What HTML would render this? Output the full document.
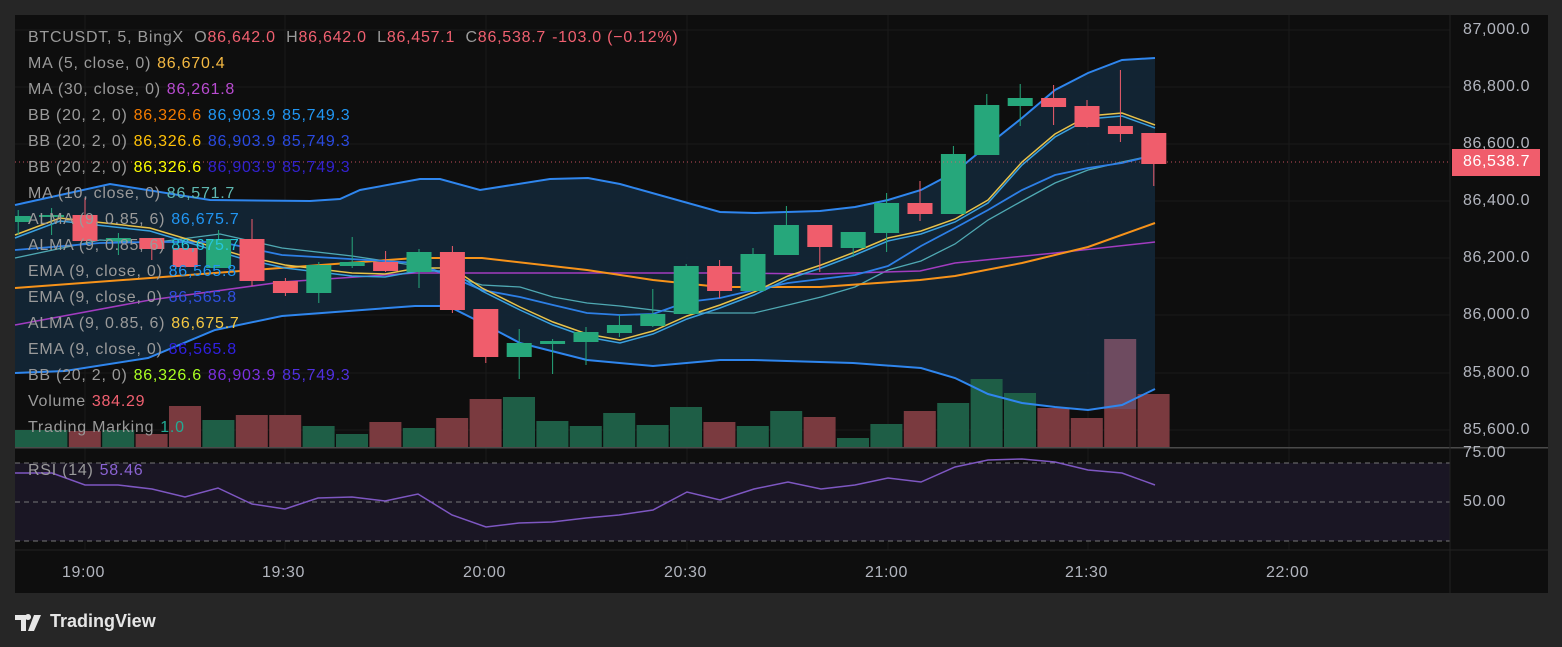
<!DOCTYPE html><html><head><meta charset="utf-8"><style>
body{margin:0;background:#262626;width:1562px;height:647px;overflow:hidden;font-family:"Liberation Sans",sans-serif}
#c{position:absolute;left:15px;top:15px;width:1533px;height:578px;background:#0e0e0e}
svg{position:absolute;left:0;top:0}
.lg{position:absolute;left:28px;font-size:16px;letter-spacing:0.75px;color:#9a9a9a;white-space:nowrap;line-height:18px}
.lg span{margin-left:6px}
.ax{position:absolute;font-size:16px;letter-spacing:0.6px;color:#b2b5be}
#logo{position:absolute;left:15px;top:610px;color:#e6e6e6;font-size:18px;font-weight:bold}
</style></head><body>
<div id="c"></div>
<svg id="s" width="1562" height="647"></svg>
<div id="lgs"></div>
<div id="logo"><svg width="30" height="20" viewBox="0 0 30 20" style="position:relative;top:3px;left:0"><path d="M0 2h11v16h-5v-11h-6z M13 7a3 3 0 1 1 0.1 0z M19 2h7l-7 16h-6z" fill="#e6e6e6"/></svg><span style="position:absolute;left:35px;top:1px;white-space:nowrap">TradingView</span></div>
<script>
const S=document.getElementById('s');let h='';
[30,87,144,201,258,315,373,430].forEach(y=>h+=`<line x1="15" x2="1450" y1="${y}" y2="${y}" stroke="#1a1a1a"/>`);
[85,285,486,687,888,1088,1289].forEach(x=>h+=`<line x1="${x}" x2="${x}" y1="15" y2="550" stroke="#1a1a1a"/>`);
function pl(p){return p.map(a=>a.join(',')).join(' ')}
const up=[[15,205],[110,184],[210,200],[310,201],[340,199],[360,190],[420,179],[440,179],[480,190],[550,179],[588,178],[620,184],[720,212],[755,213],[820,211],[855,207],[888,200],[921,190],[955,172],[988,145],[1022,118],[1055,90],[1088,73],[1122,60],[1155,58]];
const lo=[[15,373],[65,371],[148,358],[215,330],[282,316],[415,306],[448,306],[482,323],[520,343],[587,360],[653,366],[720,360],[753,360],[820,362],[853,363],[921,368],[955,378],[988,394],[1022,403],[1055,407],[1088,410],[1122,405],[1155,389]];
h+=`<polygon points="${pl(up)} ${pl(lo.slice().reverse())}" fill="#13283a" opacity=".85"/>`;
const vol=[[-2,430,1],[-1,430,1],[0,431,0],[1,430,1],[2,434,0],[3,406,0],[4,420,1],[5,415,0],[6,415,0],[7,426,1],[8,434,1],[9,422,0],[10,428,1],[11,418,0],[12,399,0],[13,397,1],[14,421,1],[15,426,1],[16,413,1],[17,425,1],[18,407,1],[19,422,0],[20,426,1],[21,411,1],[22,417,0],[23,438,1],[24,424,1],[25,411,0],[26,403,1],[27,379,1],[28,393,1],[29,408,0],[30,418,0],[31,339,2],[32,394,0]];
vol.forEach(v=>{let x=85+v[0]*33.4-16.2;let c=v[2]==1?'#1e5e46':'#7a3a3f';if(x<15)x=15;
if(v[2]==2){h+=`<rect x="${x}" y="339" width="32" height="70" fill="#6e4b60"/><rect x="${x}" y="409" width="32" height="38" fill="#7a3a3f"/>`}
else h+=`<rect x="${x}" y="${v[1]}" width="32" height="${447-v[1]}" fill="${c}"/>`});
function L(p,c,w){h+=`<polyline points="${pl(p)}" fill="none" stroke="${c}" stroke-width="${w||1.5}"/>`}
L([[15,258],[100,240],[150,243],[220,234],[282,248],[352,256],[418,266],[482,285],[520,287],[553,297],[587,303],[620,306],[653,310],[687,313],[754,313],[788,305],[821,297],[855,287],[888,270],[921,261],[955,244],[988,220],[1022,201],[1055,183],[1088,170],[1122,162],[1155,155]],'#4fa9b3',1.3);
L([[15,325],[150,300],[282,282],[415,273],[482,273],[720,273],[820,274],[920,271],[955,263],[1055,253],[1155,242]],'#a23cc0',1.5);
L([[15,288],[150,278],[280,268],[415,258],[482,258],[587,270],[653,280],[720,287],[820,287],[920,280],[955,276],[1022,263],[1088,247],[1155,223]],'#f7931a',2);
L([[15,250],[100,243],[150,242],[220,242],[282,255],[418,263],[482,290],[520,297],[553,305],[587,313],[620,315],[653,314],[687,302],[720,298],[754,290],[788,283],[821,279],[855,275],[888,266],[921,246],[955,228],[988,210],[1022,190],[1055,175],[1088,168],[1122,163],[1155,155]],'#2d7fe6',1.8);
const yl=[[15,235],[60,218],[150,228],[240,255],[285,265],[352,273],[385,274],[418,268],[452,268],[482,288],[520,307],[553,322],[587,334],[620,340],[653,331],[687,316],[720,305],[754,292],[788,276],[821,265],[855,252],[888,238],[921,231],[955,219],[988,200],[1022,162],[1055,134],[1088,116],[1122,113],[1155,125]];
L(yl.map(p=>[p[0],p[1]+3]),'#3aa0e0',1.5);L(yl,'#e8c24a',1.5);
L(up,'#2f86ee',2);L(lo,'#2f86ee',2);
const cd=[[-2,216,222,210,235,1],[-1,215,217,208,235,1],[0,215,241,198,241,0],[1,238,241,233,255,1],[2,238,249,238,260,0],[3,248,267,248,267,0],[4,239,268,230,268,1],[5,239,281,219,286,0],[6,281,293,278,296,0],[7,265,293,262,303,1],[8,262,266,237,268,1],[9,262,271,251,272,0],[10,252,272,249,288,1],[11,252,310,246,313,0],[12,309,357,309,363,0],[13,343,357,329,379,1],[14,341,344,339,374,1],[15,332,342,327,365,1],[16,325,333,315,337,1],[17,314,326,289,327,1],[18,266,314,264,314,1],[19,266,291,260,298,0],[20,254,291,248,291,1],[21,225,255,206,255,1],[22,225,247,225,272,0],[23,232,248,232,257,1],[24,203,233,193,252,1],[25,203,214,181,221,0],[26,154,214,146,214,1],[27,105,155,94,155,1],[28,98,106,84,126,1],[29,98,107,85,125,0],[30,106,127,100,128,0],[31,126,134,70,142,0],[32,133,164,133,186,0]];
cd.forEach(c=>{let x=85+c[0]*33.4;let col=c[5]?'#26a77b':'#f05d6c';let bx=Math.max(15,x-12.5);let bw=x-12.5<15?x+12.5-15:25;
if(x>=15)h+=`<line x1="${x}" x2="${x}" y1="${c[3]}" y2="${c[4]}" stroke="${col}"/>`;
h+=`<rect x="${bx}" y="${c[1]}" width="${bw}" height="${Math.max(2,c[2]-c[1])}" fill="${col}"/>`});
h+=`<line x1="15" x2="1450" y1="162" y2="162" stroke="#f05d6c" stroke-dasharray="1 3" opacity=".8"/>`;
h+=`<rect x="15" y="447" width="1533" height="1.5" fill="#4a4a4a"/>`;
h+=`<rect x="15" y="463" width="1435" height="78" fill="#1a1624"/>`;
[463,502,541].forEach(y=>h+=`<line x1="15" x2="1450" y1="${y}" y2="${y}" stroke="#777" stroke-dasharray="5 4"/>`);
L([[15,473],[52,473],[85,485],[118,485],[152,489],[185,497],[218,488],[252,504],[285,509],[318,498],[352,497],[385,501],[418,494],[452,515],[486,527],[519,523],[552,522],[586,518],[619,515],[653,510],[687,492],[720,500],[754,489],[788,482],[821,489],[855,485],[888,478],[921,482],[955,467],[988,460],[1022,459],[1055,462],[1088,470],[1122,473],[1155,485]],'#7e57c2',1.5);
h+=`<line x1="15" x2="1548" y1="550" y2="550" stroke="#222"/><line x1="1450" x2="1450" y1="15" y2="593" stroke="#222"/>`;
h+=`<rect x="1452" y="149" width="88" height="27" fill="#f05d6c"/>`;
S.innerHTML=h;
let t='';
[["87,000.0",30],["86,800.0",87],["86,600.0",144],["86,400.0",201],["86,200.0",258],["86,000.0",315],["85,800.0",373],["85,600.0",430],["75.00",453],["50.00",502]].forEach(a=>t+=`<div class="ax" style="left:1463px;top:${a[1]-9}px">${a[0]}</div>`);
t+=`<div class="ax" style="left:1463px;top:153px;color:#fff">86,538.7</div>`;
[["19:00",85],["19:30",285],["20:00",486],["20:30",687],["21:00",888],["21:30",1088],["22:00",1289]].forEach(a=>t+=`<div class="ax" style="left:${a[1]-23}px;top:564px">${a[0]}</div>`);
const R='#f06070';
const lg=[
`BTCUSDT, 5, BingX&nbsp; O<b style="color:${R};font-weight:normal">86,642.0</b>&nbsp; H<b style="color:${R};font-weight:normal">86,642.0</b>&nbsp; L<b style="color:${R};font-weight:normal">86,457.1</b>&nbsp; C<b style="color:${R};font-weight:normal">86,538.7</b><span style="color:${R}">-103.0 (−0.12%)</span>`,
`MA (5, close, 0)<span style="color:#f5b942">86,670.4</span>`,
`MA (30, close, 0)<span style="color:#b84bd0">86,261.8</span>`,
`BB (20, 2, 0)<span style="color:#f57c00">86,326.6</span><span style="color:#2196f3">86,903.9</span><span style="color:#2196f3">85,749.3</span>`,
`BB (20, 2, 0)<span style="color:#ffc107">86,326.6</span><span style="color:#2a4ae0">86,903.9</span><span style="color:#2a4ae0">85,749.3</span>`,
`BB (20, 2, 0)<span style="color:#ffff00">86,326.6</span><span style="color:#3322d0">86,903.9</span><span style="color:#3322d0">85,749.3</span>`,
`MA (10, close, 0)<span style="color:#5fb8b0">86,571.7</span>`,
`ALMA (9, 0.85, 6)<span style="color:#2196f3">86,675.7</span>`,
`ALMA (9, 0.85, 6)<span style="color:#26c6da">86,675.7</span>`,
`EMA (9, close, 0)<span style="color:#2196f3">86,565.8</span>`,
`EMA (9, close, 0)<span style="color:#3050e0">86,565.8</span>`,
`ALMA (9, 0.85, 6)<span style="color:#f5c842">86,675.7</span>`,
`EMA (9, close, 0)<span style="color:#3020e0">86,565.8</span>`,
`BB (20, 2, 0)<span style="color:#aaff22">86,326.6</span><span style="color:#7b30e0">86,903.9</span><span style="color:#5030e0">85,749.3</span>`,
`Volume<span style="color:${R}">384.29</span>`,
`Trading Marking<span style="color:#22ab94">1.0</span>`];
lg.forEach((s,i)=>t+=`<div class="lg" style="top:${29+i*26}px">${s}</div>`);
t+=`<div class="lg" style="top:462px">RSI (14)<span style="color:#8a63d2">58.46</span></div>`;
document.getElementById('lgs').innerHTML=t;
</script>
</body></html>
